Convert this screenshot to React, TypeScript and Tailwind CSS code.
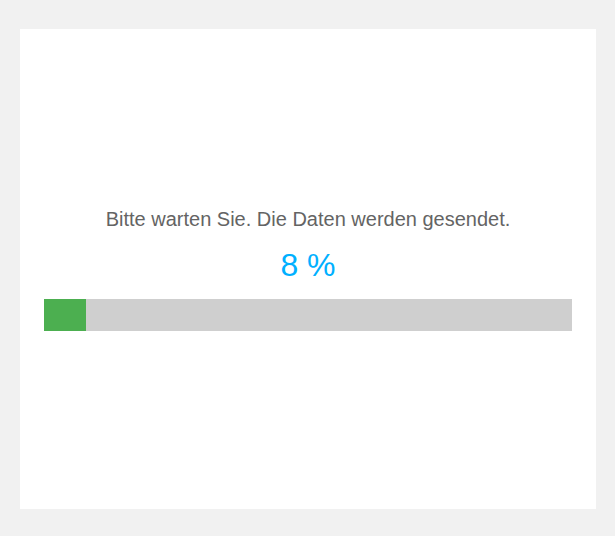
import React from 'react';

const App = () => {
  const progress = 8;

  return (
    <div className="w-[615px] h-[536px] bg-[#f1f1f1] pt-[29px] pl-5 pr-[19px] font-['Liberation_Sans',Arial,sans-serif]">
      <div className="bg-white h-[480px] px-6 flex flex-col justify-center">
        <p className="text-center text-[20px] leading-[24px] text-[#646464]">
          Bitte warten Sie. Die Daten werden gesendet.
        </p>
        <p className="text-center text-[32px] leading-[36px] text-[#00b0ff] mt-4">{progress} %</p>
        <div className="mt-4 h-8 bg-[#cfcfcf]">
          <div className="h-full bg-[#4caf50]" style={{ width: `${progress}%` }} />
        </div>
      </div>
    </div>
  );
};

export default App;
